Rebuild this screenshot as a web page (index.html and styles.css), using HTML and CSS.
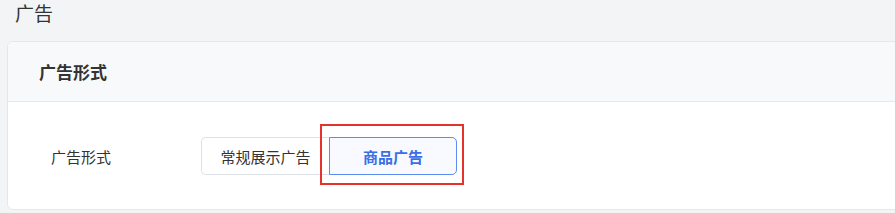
FILE: index.html
```html
<!DOCTYPE html>
<html lang="zh">
<head>
<meta charset="utf-8">
<link rel="stylesheet" href="styles.css">
</head>
<body>
<div class="page">
  <h1 class="title">广告</h1>
  <div class="card">
    <div class="card-header">广告形式</div>
    <div class="card-body">
      <div class="form-row">
        <div class="label">广告形式</div>
        <div class="radio-group">
          <div class="radio-btn">常规展示广告</div>
          <div class="radio-btn active">商品广告<span class="annot"></span></div>
        </div>
      </div>
    </div>
  </div>
</div>
</body>
</html>
```
FILE: styles.css
```css
html, body {
  margin: 0;
  padding: 0;
  background: #f3f4f6;
  font-family: "Noto Sans CJK SC", "Noto Sans", sans-serif;
  color: #333;
  overflow: hidden;
}
.page {
  width: 895px;
  height: 213px;
}
.title {
  margin: 0;
  padding: 1px 0 0 15px;
  font-size: 19px;
  font-weight: 400;
  line-height: 24px;
  height: 40px;
  box-sizing: border-box;
  color: #333;
}
.card {
  margin: 1px -12px 0 7px;
  border: 1px solid #e6e7ea;
  border-radius: 6px;
  background: #fff;
  overflow: hidden;
}
.card-header {
  height: 59px;
  line-height: 59px;
  padding-left: 31px;
  background: #f8f9fa;
  border-bottom: 1px solid #e7e8eb;
  font-size: 17px;
  font-weight: 700;
  color: #333;
}
.card-body {
  padding: 35px 0 34px 43px;
  height: 107px;
  box-sizing: border-box;
}
.form-row {
  display: flex;
  align-items: center;
}
.label {
  width: 150px;
  font-size: 15px;
  color: #333;
}
.radio-group {
  display: flex;
}
.radio-btn {
  position: relative;
  width: 128px;
  height: 38px;
  box-sizing: border-box;
  display: flex;
  align-items: center;
  justify-content: center;
  font-size: 15px;
  color: #333;
  border: 1px solid #dcdfe4;
  background: #fff;
}
.radio-btn:first-child {
  border-radius: 5px 0 0 5px;
  border-right: none;
}
.radio-btn.active {
  border-color: #5b8cf2;
  color: #3a6fe6;
  background: #f8faff;
  font-weight: 700;
  border-radius: 0 5px 5px 0;
}
.annot {
  position: absolute;
  left: -10px;
  top: -14px;
  right: -8px;
  bottom: -11px;
  border: 2px solid #e5332b;
}
```
